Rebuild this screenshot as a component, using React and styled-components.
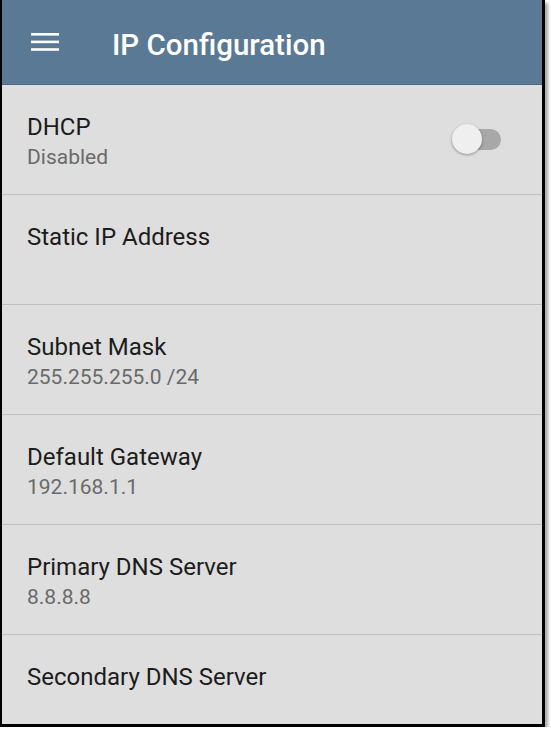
import styled, { createGlobalStyle } from 'styled-components'

const Global = createGlobalStyle`
    html, body {
        margin: 0;
        padding: 0;
        background: #ffffff;
    }
    body {
        font-family: Roboto, "Liberation Sans", sans-serif;
    }
`

//moldura com sombra
const Frame = styled.div`
    width: 540px;
    height: 724px;
    border-left: 2px solid #000;
    border-right: 3px solid #000;
    border-bottom: 3px solid #000;
    box-shadow: 3px 3px 3px rgba(0, 0, 0, 0.35);
    background: #dedede;
    display: flex;
    flex-direction: column;
    overflow: hidden;
`
const Toolbar = styled.header`
    flex-shrink: 0;
    display: flex;
    align-items: center;
    background: #5a7995;
    border-bottom: 1px solid #4b6884;
    box-sizing: border-box;
    height: 85px;
    padding-left: 29px;
`
const Menu = styled.svg`
    width: 28px;
    height: 20px;
    margin-top: -1px;
`
const Titulo = styled.h1`
    margin: 5px 0 0 53px;
    font-size: 29.5px;
    font-weight: 500;
    color: #ffffff;
`
const Lista = styled.div`
    display: flex;
    flex-direction: column;
`
const Linha = styled.div`
    height: 110px;
    box-sizing: border-box;
    border-bottom: 1px solid #bfbfbf;
    padding: 28px 0 0 25px;
    display: flex;
    justify-content: space-between;
    align-items: flex-start;
    &:last-child {
        border-bottom: none;
    }
`
const Textos = styled.div`
    display: flex;
    flex-direction: column;
`
const Rotulo = styled.div`
    font-size: 24px;
    line-height: 28px;
    color: #1c1c1c;
`
const Valor = styled.div`
    font-size: 21px;
    line-height: 24px;
    margin-top: 4px;
    color: #6a6a6a;
`
const Chave = styled.div`
    position: relative;
    align-self: center;
    width: 50px;
    height: 31px;
    margin-right: 40px;
    margin-top: -28px;
`
const Trilho = styled.div`
    position: absolute;
    left: 14px;
    top: 5px;
    width: 35px;
    height: 21px;
    border-radius: 11px;
    background: #a8a8a8;
`
const Bolinha = styled.div`
    position: absolute;
    left: 0;
    top: 0;
    width: 30px;
    height: 30px;
    border-radius: 50%;
    background: #efefef;
    box-shadow: 0 1px 3px rgba(0, 0, 0, 0.35);
`

const itens = [
    { rotulo: 'Static IP Address', valor: '' },
    { rotulo: 'Subnet Mask', valor: '255.255.255.0 /24' },
    { rotulo: 'Default Gateway', valor: '192.168.1.1' },
    { rotulo: 'Primary DNS Server', valor: '8.8.8.8' },
    { rotulo: 'Secondary DNS Server', valor: '' },
]

const App = () => {
    return (
        <>
            <Global />
            <Frame>
                <Toolbar>
                    <Menu viewBox="0 0 28 20">
                        <rect x="0" y="1" width="28" height="2.6" fill="#fff" />
                        <rect x="0" y="8.6" width="28" height="2.6" fill="#fff" />
                        <rect x="0" y="16.2" width="28" height="2.6" fill="#fff" />
                    </Menu>
                    <Titulo>IP Configuration</Titulo>
                </Toolbar>
                <Lista>
                    <Linha>
                        <Textos>
                            <Rotulo>DHCP</Rotulo>
                            <Valor>Disabled</Valor>
                        </Textos>
                        <Chave>
                            <Trilho />
                            <Bolinha />
                        </Chave>
                    </Linha>
                    {itens.map(item => (
                        <Linha key={item.rotulo}>
                            <Textos>
                                <Rotulo>{item.rotulo}</Rotulo>
                                {item.valor && <Valor>{item.valor}</Valor>}
                            </Textos>
                        </Linha>
                    ))}
                </Lista>
            </Frame>
        </>
    )
}

export default App
